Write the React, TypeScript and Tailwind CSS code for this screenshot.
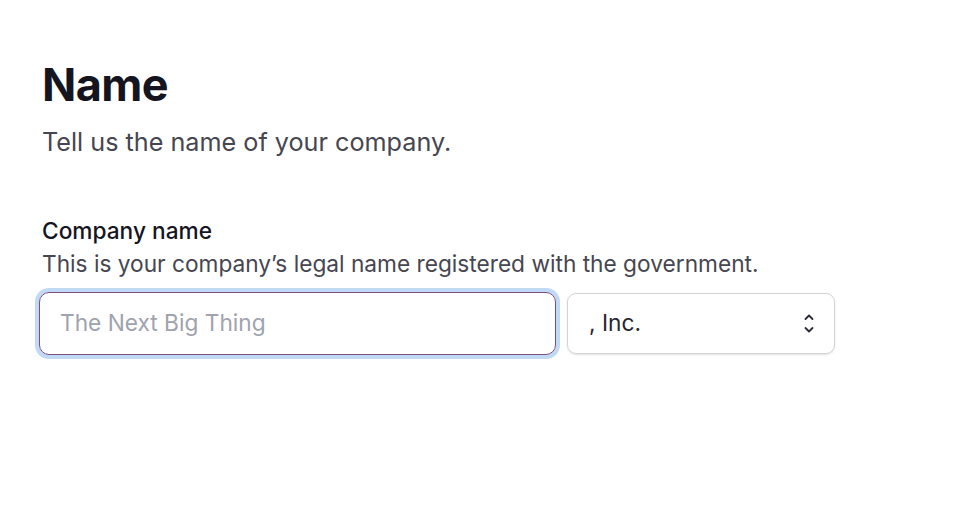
import React from "react";

export default function App() {
  return (
    <div className="min-h-[512px] w-full bg-white" style={{ fontFamily: "Inter, 'Noto Sans', sans-serif" }}>
      <div className="pl-[42px] pt-[57px]">
        <h1 className="text-[45px] leading-[56px] font-bold text-[#15151f] tracking-[-0.6px]">Name</h1>
        <p className="mt-[13px] text-[25.2px] leading-[32px] text-[#464651]">Tell us the name of your company.</p>
        <div className="mt-[59px]">
          <div className="text-[22.7px] leading-[28px] font-medium text-[#15151f]">Company name</div>
          <div className="mt-[5px] text-[22.7px] leading-[28px] text-[#464651]">
            This is your company’s legal name registered with the government.
          </div>
          <div className="mt-[14px] flex items-center gap-[11px]">
            <div className="w-[517px] h-[63px] -ml-[3px] rounded-[10px] border border-[#7b4f7e] ring-[4px] ring-[#c0daf6] flex items-center px-[20px]">
              <input
                className="w-full bg-transparent outline-none text-[22.7px] placeholder:text-[#a0a3ad] text-[#15151f]"
                placeholder="The Next Big Thing"
                style={{ fontFamily: "Inter, 'Noto Sans', sans-serif" }}
              />
            </div>
            <div className="w-[268px] h-[61px] rounded-[9px] border border-[#d4d4d8] shadow-[0_1px_2px_rgba(0,0,0,0.12)] flex items-center justify-between pl-[21px] pr-[20px]">
              <span className="text-[22.7px] font-normal text-[#26262e]">, Inc.</span>
              <svg width="10" height="21" viewBox="0 0 10 21" fill="none" stroke="#2b2b33" strokeWidth="1.8" strokeLinecap="round" strokeLinejoin="round">
                <path d="M1.5 6 5 2.5 8.5 6" />
                <path d="M1.5 15 5 18.5 8.5 15" />
              </svg>
            </div>
          </div>
        </div>
      </div>
    </div>
  );
}
